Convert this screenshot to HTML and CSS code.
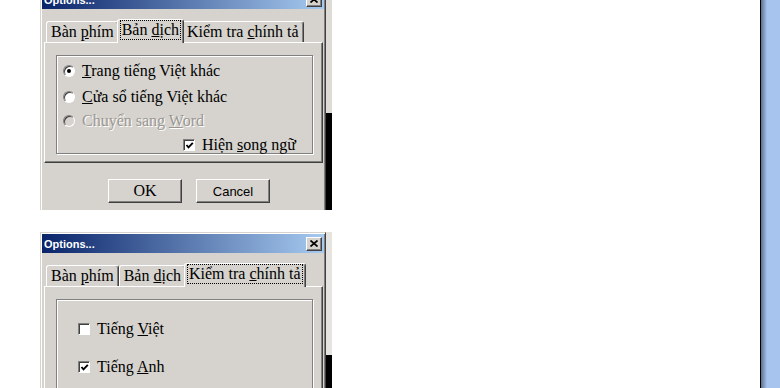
FILE: index.html
```html
<!DOCTYPE html>
<html lang="vi">
<head>
    <meta charset="UTF-8">
    <meta name="viewport" content="width=device-width, initial-scale=1.0">
    <title>Options...</title>
    <link rel="stylesheet" href="styles.css">
</head>
<body>
    <div class="screen">
        <div class="desk">

            <!-- First shot: Bản dịch tab -->
            <div class="shot shot-top">
                <div class="dialog">
                    <div class="titlebar">
                        <span class="title">Options...</span>
                        <span class="close"><svg width="8" height="7" viewBox="0 0 8 7"><path d="M0.5 0.5 L7.5 6.5 M7.5 0.5 L0.5 6.5" stroke="#000" stroke-width="1.7" fill="none"/></svg></span>
                    </div>
                    <div class="tabs">
                        <div class="tab">Bàn <u>p</u>hím</div>
                        <div class="tab active"><span class="focus">Bản <u>d</u>ịch</span></div>
                        <div class="tab">Kiểm tra <u>c</u>hính tả</div>
                    </div>
                    <div class="panel panel-top">
                        <div class="group group-translate">
                            <div class="row"><span class="radio checked"></span><span><u>T</u>rang tiếng Việt khác</span></div>
                            <div class="row"><span class="radio"></span><span><u>C</u>ửa sổ tiếng Việt khác</span></div>
                            <div class="row disabled"><span class="radio"></span><span>Chuyển sang <u>W</u>ord</span></div>
                            <div class="row row-right"><span class="check"><svg width="9" height="9" viewBox="0 0 9 9"><path d="M1.5 4 L3.5 6.3 L7.8 1.8" stroke="#000" stroke-width="1.9" fill="none"/></svg></span><span>Hiện <u>s</u>ong ngữ</span></div>
                        </div>
                    </div>
                    <div class="buttons">
                        <button class="btn btn-ok">OK</button>
                        <button class="btn btn-cancel">Cancel</button>
                    </div>
                </div>
                <div class="behind behind-top"></div>
            </div>

            <!-- Second shot: Kiểm tra chính tả tab -->
            <div class="shot shot-bottom">
                <div class="dialog">
                    <div class="titlebar">
                        <span class="title">Options...</span>
                        <span class="close"><svg width="8" height="7" viewBox="0 0 8 7"><path d="M0.5 0.5 L7.5 6.5 M7.5 0.5 L0.5 6.5" stroke="#000" stroke-width="1.7" fill="none"/></svg></span>
                    </div>
                    <div class="tabs">
                        <div class="tab">Bàn <u>p</u>hím</div>
                        <div class="tab">Bản <u>d</u>ịch</div>
                        <div class="tab active"><span class="focus">Kiểm tra <u>c</u>hính tả</span></div>
                    </div>
                    <div class="panel panel-bottom">
                        <div class="group group-spell">
                            <div class="row"><span class="check empty"></span><span>Tiếng <u>V</u>iệt</span></div>
                            <div class="row"><span class="check"><svg width="9" height="9" viewBox="0 0 9 9"><path d="M1.5 4 L3.5 6.3 L7.8 1.8" stroke="#000" stroke-width="1.9" fill="none"/></svg></span><span>Tiếng <u>A</u>nh</span></div>
                        </div>
                    </div>
                </div>
                <div class="behind behind-bottom"></div>
            </div>

        </div>
        <div class="edge"></div>
    </div>
</body>
</html>
```

FILE: styles.css
```css
/* General */
body, html {
    margin: 0;
    height: 100%;
    background: #fff;
    font-family: "Liberation Serif", "DejaVu Serif", serif;
    overflow: hidden;
}
.screen {
    display: flex;
    height: 388px;
}
.desk {
    flex: 0 0 760px;
    display: flex;
    flex-direction: column;
    gap: 22px;
    padding-left: 40px;
    box-sizing: border-box;
}
.edge {
    flex: 1;
    border-left: 1px solid #000;
    background: linear-gradient(to right, #5e6f8e, #a6c4ee 6px);
}

/* Shots */
.shot {
    display: flex;
    flex-shrink: 0;
}
.shot-top {
    height: 210px;
    overflow: hidden;
}
.shot-top .dialog {
    margin-top: -12px;
}
.shot-bottom {
    height: 160px;
    overflow: hidden;
}
.behind {
    width: 6px;
}
.behind-top {
    background: linear-gradient(#dedbd6 0, #dedbd6 113px, #000 113px);
}
.behind-bottom {
    background: linear-gradient(#e6e4e0 0, #e6e4e0 123px, #000 123px);
}

/* Dialog window */
.dialog {
    width: 286px;
    box-sizing: border-box;
    background: #d6d3ce;
    border: 1px solid;
    border-color: #d6d3ce #404040 #404040 #d6d3ce;
    box-shadow: inset 1px 1px #fff, inset -1px -1px #808080;
    padding: 1px;
    align-self: flex-start;
}
.titlebar {
    height: 19px;
    display: flex;
    align-items: center;
    justify-content: space-between;
    padding: 0 2px 0 2px;
    background: linear-gradient(to right, #0a246a, #a6caf0);
}
.title {
    color: #fff;
    font-family: "Liberation Sans", Arial, sans-serif;
    font-weight: bold;
    font-size: 11px;
}
.close {
    width: 16px;
    height: 14px;
    box-sizing: border-box;
    display: flex;
    align-items: center;
    justify-content: center;
    background: #d6d3ce;
    border: 1px solid;
    border-color: #fff #404040 #404040 #fff;
    box-shadow: inset -1px -1px #808080;
}

/* Tabs */
.tabs {
    display: flex;
    align-items: flex-end;
    margin-top: 10px;
    padding-left: 4px;
    height: 23px;
}
.tab {
    height: 21px;
    box-sizing: border-box;
    padding: 0 4px;
    line-height: 19px;
    font-size: 16px;
    border: 1px solid;
    border-bottom: none;
    border-color: #fff #404040 #fff #fff;
    box-shadow: inset -1px 0 #808080;
    border-radius: 3px 3px 0 0;
    white-space: nowrap;
}
.tab.active {
    height: 24px;
    margin: 0 -2px -1px;
    padding: 0 3px;
    background: #d6d3ce;
    position: relative;
    z-index: 1;
}
.focus {
    outline: 1px dotted #000;
    outline-offset: 0;
    display: inline-block;
    line-height: 18px;
    margin-top: 1px;
    padding: 0 1px;
}

/* Panel */
.panel {
    box-sizing: border-box;
    margin: 0 1px 0 2px;
    padding: 12px 9px 0 11px;
    border: 1px solid;
    border-color: #fff #404040 #404040 #fff;
    box-shadow: inset -1px -1px #808080;
}
.panel-top {
    height: 121px;
}
.panel-bottom {
    height: 140px;
}
.group {
    box-sizing: border-box;
    border: 1px solid #808080;
    box-shadow: inset 1px 1px #fff, 1px 1px #fff;
    font-size: 16px;
}
.group-translate {
    height: 99px;
    padding: 2px 16px 0 6px;
}
.group-spell {
    height: 120px;
    padding: 17px 0 0 21px;
    display: flex;
    flex-direction: column;
    gap: 14px;
}
.row {
    height: 25px;
    display: flex;
    align-items: center;
    gap: 7px;
    white-space: nowrap;
}
.group-translate .row:nth-child(2) {
    height: 27px;
}
.group-translate .row:nth-child(3) {
    height: 22px;
}
.group-spell .row {
    height: 24px;
}
.row-right {
    justify-content: flex-end;
}
.disabled {
    color: #9a9792;
    text-shadow: 1px 1px #fff;
}

/* Radio and checkbox */
.radio {
    width: 12px;
    height: 12px;
    box-sizing: border-box;
    border-radius: 50%;
    background: #fff;
    border: 1px solid;
    border-color: #808080 #fff #fff #808080;
    box-shadow: inset 1px 1px #404040;
    display: flex;
    align-items: center;
    justify-content: center;
}
.radio.checked::after {
    content: "";
    width: 4px;
    height: 4px;
    border-radius: 50%;
    background: #000;
}
.disabled .radio {
    background: #d6d3ce;
}
.check {
    width: 12px;
    height: 12px;
    box-sizing: border-box;
    background: #fff;
    border: 1px solid;
    border-color: #808080 #fff #fff #808080;
    box-shadow: inset 1px 1px #404040;
    display: flex;
    align-items: center;
    justify-content: center;
}
.check svg {
    margin: 1px 0 0 1px;
}

/* Buttons */
.buttons {
    display: flex;
    gap: 14px;
    padding: 16px 0 7px 66px;
}
.btn {
    width: 74px;
    height: 24px;
    padding: 0;
    background: #d6d3ce;
    border: 1px solid;
    border-color: #fff #404040 #404040 #fff;
    box-shadow: inset -1px -1px #808080;
    color: #000;
}
.btn-ok {
    font-family: "Liberation Serif", serif;
    font-size: 16px;
}
.btn-cancel {
    font-family: "Liberation Sans", Arial, sans-serif;
    font-size: 13px;
}
```
